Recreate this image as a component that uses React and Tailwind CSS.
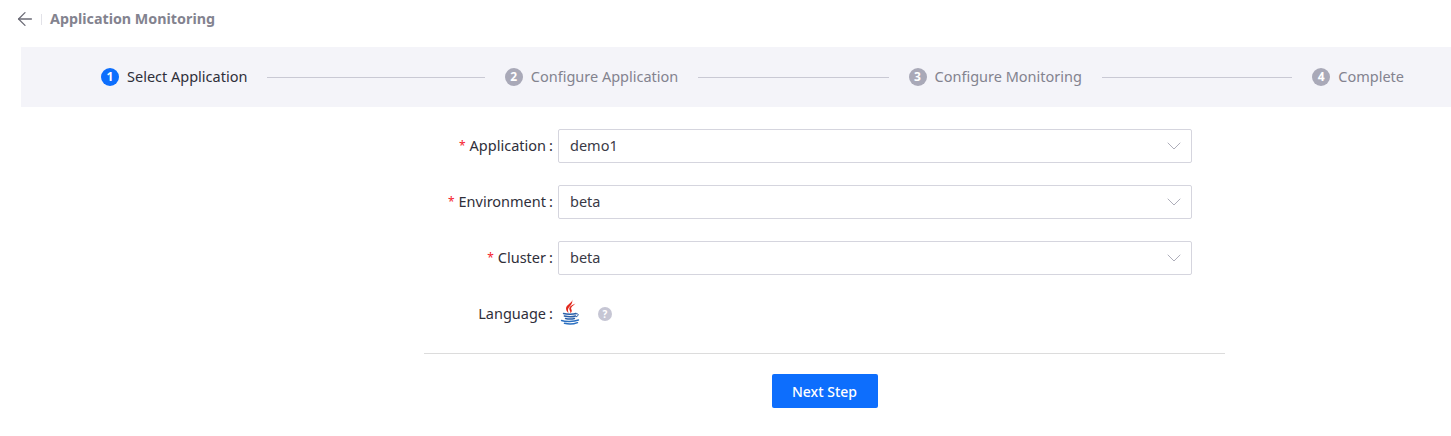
import { ArrowLeft, ChevronDown } from "lucide-react";

const steps = ["Select Application", "Configure Application", "Configure Monitoring"];

function StepBadge({ n, active }) {
  return (
    <span
      className={`flex h-[18px] w-[18px] shrink-0 items-center justify-center rounded-full text-[12px] font-bold leading-none text-white ${
        active ? "bg-[#0d6efd]" : "bg-[#a9a9b8]"
      }`}
    >
      {n}
    </span>
  );
}

function Field({ label, value }) {
  return (
    <div className="flex h-[34px] items-center">
      <label className="flex w-[134px] shrink-0 items-center justify-end text-[14.5px] text-[#2f2f3a]">
        <span className="mr-1 text-[12px] text-[#f5222d]">*</span>
        {label}
        <span className="ml-[3px] mr-[7px] w-[2px]">:</span>
      </label>
      <div className="flex h-[34px] w-[634px] items-center justify-between rounded-[2px] border border-[#d5d5de] pl-[11px] pr-[5px] text-[14.5px] text-[#3a3a46]">
        <span>{value}</span>
        <ChevronDown size={24} strokeWidth={0.900} className="text-[#a5a5b2]" />
      </div>
    </div>
  );
}

function JavaIcon() {
  return (
    <svg width="22" height="26" viewBox="0 0 22 26" fill="none">
      <path d="M12 0c1.500 3.500-6 5.500-6 9.500 0 2.200 1.500 3.300 2.500 5-.1-2-1-3.200-.2-5C9.300 7.200 13.500 5 12 0z" fill="#e2281d" />
      <path d="M15.500 4.500c-2.600 1.300-6.500 2.700-6.200 5.500.1 1.600 1.500 2.500 1.100 4.300 2-1.500 1.400-3 .8-4.200-.6-1.800 2.200-3.600 4.300-5.600z" fill="#e2281d" />
      <path d="M3.500 14.500c3.200.9 10 .9 12.500 0M4.300 17c3.200.8 8.800.8 11.200 0M5.500 19.500c2.700.6 6.500.6 9 0" stroke="#2a5ea8" strokeWidth="1.400" strokeLinecap="round" />
      <path d="M16 14.800c2.800-.8 3.300 1.900.2 3" stroke="#2a5ea8" strokeWidth="1" strokeLinecap="round" />
      <path d="M1.500 21.500c3.800 1.400 12 1.400 17-.5M4.500 24.300c3.800 1 8.800 1 13-.7" stroke="#2a6fc0" strokeWidth="1.400" strokeLinecap="round" />
    </svg>
  );
}

export default function App() {
  return (
    <div className="min-h-[436px] bg-white font-['Noto_Sans',sans-serif]">
      <header className="flex h-[47px] items-center pb-[9px] pl-[14px]">
        <ArrowLeft size={22} strokeWidth={1.400} className="text-[#6b6b76]" />
        <span className="ml-[5px] mr-[8px] h-[11px] w-px bg-[#e2e2e8]" />
        <h1 className="text-[14.300px] font-bold text-[#83838f]">Application Monitoring</h1>
      </header>

      <div className="ml-[21px]">
        <div className="flex h-[60px] items-center gap-5 bg-[#f4f4f9] pl-[80px] pr-[47px]">
          {steps.map((s, i) => (
            <div key={s} className="flex flex-1 items-center">
              <StepBadge n={i + 1} active={i === 0} />
              <span className={`ml-2 whitespace-nowrap text-[14.5px] ${i === 0 ? "text-[#2f2f3a]" : "text-[#83838f]"}`}>{s}</span>
              <span className="ml-5 h-px flex-1 bg-[#c9c9d4]" />
            </div>
          ))}
          <div className="flex shrink-0 items-center">
            <StepBadge n={4} />
            <span className="ml-2 text-[14.5px] text-[#83838f]">Complete</span>
          </div>
        </div>

        <div className="ml-[403px] w-[801px] pt-[22px]">
          <div className="flex flex-col gap-[22px]">
            <Field label="Application" value="demo1" />
            <Field label="Environment" value="beta" />
            <Field label="Cluster" value="beta" />
            <div className="flex h-[34px] items-center">
              <label className="flex w-[134px] shrink-0 justify-end text-[14.5px] text-[#2f2f3a]">
                Language
                <span className="ml-[3px] mr-[7px] w-[2px]">:</span>
              </label>
              <span className="ml-[2px] pb-[4px]"><JavaIcon /></span>
              <span className="ml-[16px] flex h-[14px] w-[14px] items-center justify-center rounded-full bg-[#c6c6d4] text-[10px] font-bold leading-none text-white">?</span>
            </div>
          </div>
          <div className="mt-[22px] h-px bg-[#dcdcdc]" />
          <div className="mt-5 flex justify-center">
            <button className="h-[34px] w-[106px] rounded-[2px] bg-[#0d6efd] text-[14px] font-medium text-white">Next Step</button>
          </div>
        </div>
      </div>
    </div>
  );
}
